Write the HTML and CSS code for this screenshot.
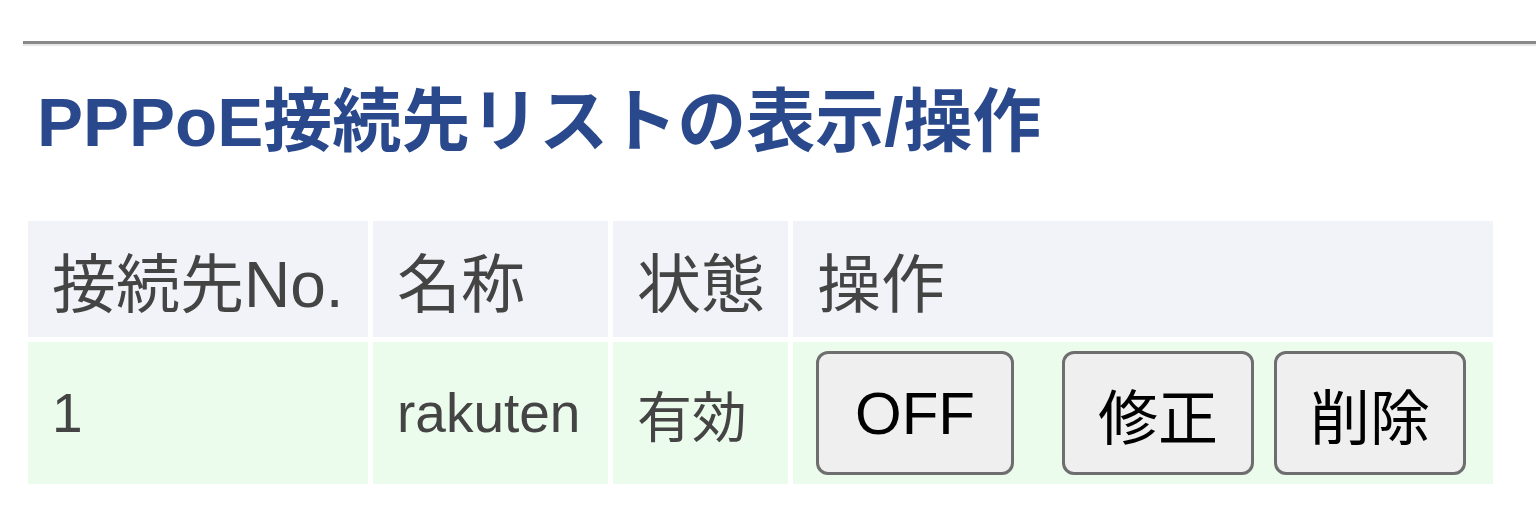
FILE: index.html
```html
<!DOCTYPE html>
<html>
<head>
    <title>PPPoE接続先リスト</title>
    <meta name="viewport" content="width=device-width, initial-scale=1.0">
    <link rel="stylesheet" href="styles.css">
</head>
<body>

    <hr class="divider">

    <!-- PPPoE list -->
    <h2 class="sectionTitle">PPPoE接続先リストの表示/操作</h2>

    <table class="listTable">
        <tr class="headRow">
            <th class="colNo">接続先No.</th>
            <th class="colName">名称</th>
            <th class="colState">状態</th>
            <th class="colOps">操作</th>
        </tr>
        <tr class="dataRow">
            <td>1</td>
            <td>rakuten</td>
            <td>有効</td>
            <td>
                <div class="ops">
                    <button class="toggleButton">OFF</button>
                    <button>修正</button>
                    <button>削除</button>
                </div>
            </td>
        </tr>
    </table>

</body>
</html>
```

FILE: styles.css
```css
body {
    margin: 0;
    background-color: #ffffff;
    font-family: "Liberation Sans", Arial, "Noto Sans CJK JP", sans-serif;
}

.divider {
    margin: 41px 0 0 23px;
    height: 0;
    border: none;
    border-top: 3px solid #888888;
    border-bottom: 2px solid #e6e6e6;
}

.sectionTitle {
    margin: 37px 0 0 37px;
    font-size: 69px;
    line-height: 80px;
    font-weight: bold;
    color: #29498c;
}

.listTable {
    margin: 53px 0 0 23px;
    width: 1475px;
    border-spacing: 5px;
    color: #444444;
}

th, td {
    padding: 0 0 0 24px;
    text-align: left;
    vertical-align: middle;
}

.headRow th {
    height: 116px;
    font-size: 64px;
    font-weight: normal;
    background-color: #f2f2f9;
}

.dataRow td {
    height: 142px;
    font-size: 55px;
    background-color: #ebfcec;
}

.colNo { width: 316px; }
.colName { width: 211px; }
.colState { width: 151px; }

.ops {
    display: flex;
    align-items: center;
    gap: 20px;
    margin-left: -1px;
}

button {
    height: 124px;
    padding: 0 33px;
    font-family: "Liberation Sans", Arial, "Noto Sans CJK JP", sans-serif;
    font-size: 60px;
    color: #000000;
    background-color: #efefef;
    border: 3px solid #6e6e6e;
    border-radius: 12px;
}

.toggleButton {
    width: 198px;
    margin-right: 28px;
}
```
